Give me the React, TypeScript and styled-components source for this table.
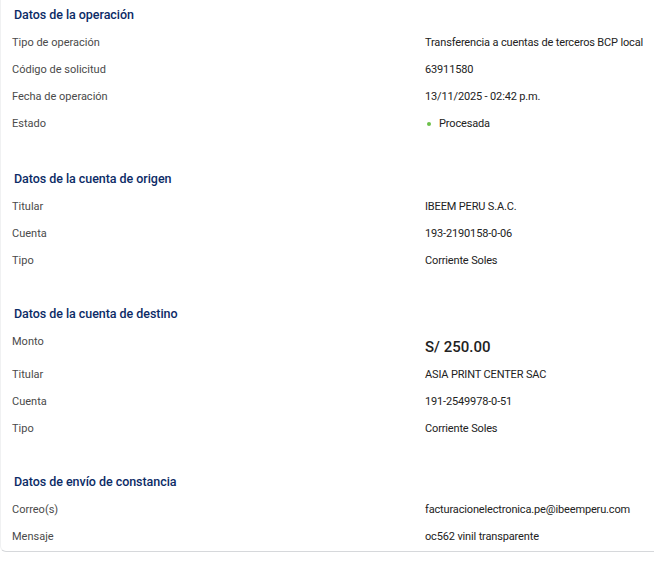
import styled, { createGlobalStyle } from 'styled-components'

const GlobalStyle = createGlobalStyle`
  html, body {
    margin: 0;
    padding: 0;
    background: #ffffff;
  }
  body {
    font-family: Roboto, "Liberation Sans", sans-serif;
    -webkit-font-smoothing: antialiased;
  }
`

const Card = styled.div`
  width: 654px;
  background: #ffffff;
  border-bottom: 1px solid #d6d8db;
  border-left: 1px solid #f0f1f2;
  border-bottom-left-radius: 6px;
  box-sizing: border-box;
  padding-top: 1px;
  padding-bottom: 1px;
`

const Section = styled.section<{ $gap: number }>`
  padding-bottom: ${p => p.$gap}px;
`

const Heading = styled.h3`
  margin: 0;
  height: 28px;
  line-height: 28px;
  padding-left: 13px;
  font-size: 12.5px;
  font-weight: 500;
  color: #0c2b66;
  letter-spacing: -0.05px;
`

const Row = styled.div<{ $tall?: boolean }>`
  display: grid;
  grid-template-columns: 413px 1fr;
  align-items: center;
  height: ${p => (p.$tall ? '33px' : '27px')};
  padding-left: 11px;
`

const Label = styled.span<{ $raise?: boolean }>`
  font-size: 11px;
  color: #4a4a4a;
  align-self: ${p => (p.$raise ? 'start' : 'center')};
  padding-top: ${p => (p.$raise ? '7px' : '0')};
`

const Value = styled.span<{ $big?: boolean }>`
  font-size: ${p => (p.$big ? '15px' : '11px')};
  font-weight: ${p => (p.$big ? 500 : 400)};
  letter-spacing: ${p => (p.$big ? '0' : '-0.15px')};
  color: #222222;
  display: flex;
  align-items: center;
  padding-top: ${p => (p.$big ? '4px' : '0')};
`

const Dot = styled.span`
  width: 4px;
  height: 4px;
  border-radius: 50%;
  background: #6cc04a;
  margin: 0 8px 0 2px;
`

type Item = { label: string; value: string; status?: boolean; big?: boolean }

const sections: { title: string; gap: number; items: Item[] }[] = [
  {
    title: 'Datos de la operación',
    gap: 28,
    items: [
      { label: 'Tipo de operación', value: 'Transferencia a cuentas de terceros BCP local' },
      { label: 'Código de solicitud', value: '63911580' },
      { label: 'Fecha de operación', value: '13/11/2025 - 02:42 p.m.' },
      { label: 'Estado', value: 'Procesada', status: true },
    ],
  },
  {
    title: 'Datos de la cuenta de origen',
    gap: 26,
    items: [
      { label: 'Titular', value: 'IBEEM PERU S.A.C.' },
      { label: 'Cuenta', value: '193-2190158-0-06' },
      { label: 'Tipo', value: 'Corriente Soles' },
    ],
  },
  {
    title: 'Datos de la cuenta de destino',
    gap: 26,
    items: [
      { label: 'Monto', value: 'S/ 250.00', big: true },
      { label: 'Titular', value: 'ASIA PRINT CENTER SAC' },
      { label: 'Cuenta', value: '191-2549978-0-51' },
      { label: 'Tipo', value: 'Corriente Soles' },
    ],
  },
  {
    title: 'Datos de envío de constancia',
    gap: 0,
    items: [
      { label: 'Correo(s)', value: 'facturacionelectronica.pe@ibeemperu.com' },
      { label: 'Mensaje', value: 'oc562 vinil transparente' },
    ],
  },
]

export default function App() {
  return (
    <>
      <GlobalStyle />
      <Card>
        {sections.map(s => (
          <Section key={s.title} $gap={s.gap}>
            <Heading>{s.title}</Heading>
            {s.items.map(it => (
              <Row key={it.label} $tall={it.big}>
                <Label $raise={it.big}>{it.label}</Label>
                <Value $big={it.big}>
                  {it.status && <Dot />}
                  {it.value}
                </Value>
              </Row>
            ))}
          </Section>
        ))}
      </Card>
    </>
  )
}
